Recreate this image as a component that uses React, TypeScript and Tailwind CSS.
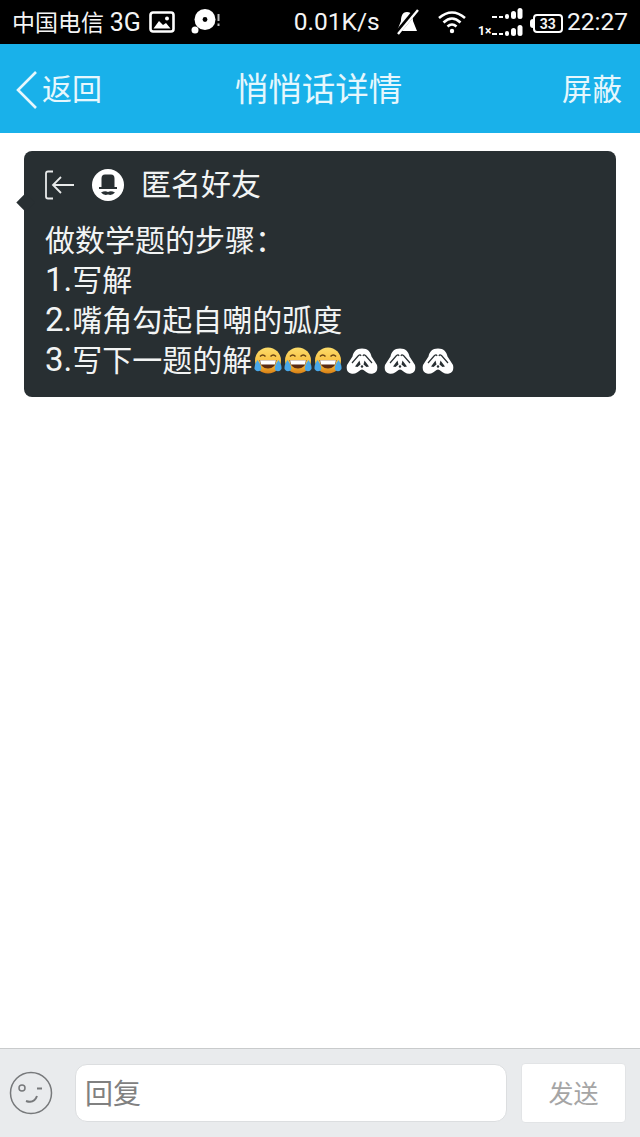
const font = { fontFamily: 'Roboto, "Noto Sans CJK SC", sans-serif' };

function Laugh() {
  return (
    <svg width="28" height="28" viewBox="0 0 28 28" className="shrink-0">
      <defs>
        <linearGradient id="lg" x1="0" y1="0" x2="0" y2="1">
          <stop offset="0" stopColor="#fcdc6a" />
          <stop offset="0.65" stopColor="#f6bb3c" />
          <stop offset="1" stopColor="#d97f14" />
        </linearGradient>
      </defs>
      <circle cx="14" cy="13.5" r="13" fill="url(#lg)" />
      <path d="M6 9.5 Q8.7 6.5 11.5 9.5 M16.5 9.5 Q19.3 6.5 22 9.5" stroke="#6a4514" strokeWidth="1.5" fill="none" />
      <path d="M5.5 13 H22.5 Q21.5 21.5 14 21.5 Q6.5 21.5 5.5 13 Z" fill="#5a2b12" />
      <path d="M6 13.2 H22 L21 17.5 H7 Z" fill="#fff" />
      <path d="M3.5 13 Q0 18 0.5 22 Q3 26 7 23 Q8 19 3.5 13 Z" fill="#4aa8e8" />
      <path d="M24.5 13 Q28 18 27.5 22 Q25 26 21 23 Q20 19 24.5 13 Z" fill="#4aa8e8" />
    </svg>
  );
}

function Monkey() {
  return (
    <svg width="32" height="27" viewBox="0 0 32 27" className="shrink-0">
      <path d="M16 0.5 C10 0.5 7.5 4 6.5 8.5 L1 17 Q-0.5 24 5 25.5 C9 26.5 12 24 14.5 22 Q16 21 17.5 22 C20 24 23 26.5 27 25.5 Q32.5 24 31 17 L25.5 8.5 C24.5 4 22 0.5 16 0.5 Z" fill="#fff" />
      <path d="M6 15 L12.5 7.5 Q14.5 6 15 8" fill="none" stroke="#282f32" strokeWidth="1.2" />
      <path d="M26 15 L19.5 7.5 Q17.5 6 17 8" fill="none" stroke="#282f32" strokeWidth="1.2" />
      <path d="M9 18.5 L13.5 12.5 L14.5 16.5 L11.5 19 Z M23 18.5 L18.5 12.5 L17.5 16.5 L20.5 19 Z" fill="#282f32" />
      <circle cx="16" cy="18.5" r="1.2" fill="#282f32" />
    </svg>
  );
}

export default function App() {
  return (
    <div className="flex h-[1137px] w-[640px] flex-col overflow-hidden bg-white" style={font}>
      <div className="flex h-[44px] shrink-0 items-center bg-black pl-[12px] pr-[12px] text-[#f4f4f4]">
        <span className="text-[23px] leading-none">中国电信 <span className="text-[25px]">3G</span></span>
        <svg width="26" height="22" viewBox="0 0 26 22" className="ml-[8px]">
          <rect x="1.5" y="1.5" width="23" height="19" rx="2.5" fill="none" stroke="#fff" strokeWidth="2.6" />
          <path d="M4.5 17.5 L10 10 L14 14 L17 12 L21.5 17.5 Z" fill="#fff" />
          <circle cx="18" cy="7.5" r="2" fill="#fff" />
        </svg>
        <svg width="32" height="26" viewBox="0 0 32 26" className="ml-[15px]">
          <circle cx="15" cy="10.5" r="10.5" fill="#fff" />
          <circle cx="15" cy="10.5" r="2.4" fill="#000" />
          <circle cx="5" cy="21" r="3.5" fill="#fff" />
          <path d="M28.5 5 V12 M28.5 14.5 V17" stroke="#bbb" strokeWidth="2" />
        </svg>
        <span className="ml-[72px] text-[24.5px] leading-none">0.01K/s</span>
        <svg width="26" height="26" viewBox="0 0 26 26" className="ml-[14px]">
          <path d="M13 3 C8 3 7 8 7 12 L3 22 H23 L19 12 C19 8 18 3 13 3 Z" fill="#fff" />
          <path d="M23 0 L3 24" stroke="#000" strokeWidth="5" />
          <path d="M24 1 L4 25" stroke="#fff" strokeWidth="2.4" />
        </svg>
        <svg width="30" height="24" viewBox="0 0 30 24" className="ml-[17px]">
          <path d="M2 8 Q15 -3 28 8 M6.5 12.5 Q15 4.5 23.5 12.5 M10.5 16.5 Q15 12.5 19.5 16.5" fill="none" stroke="#fff" strokeWidth="2.6" />
          <circle cx="15" cy="21" r="2.2" fill="#fff" />
        </svg>
        <svg width="46" height="30" viewBox="0 0 46 30" className="ml-[11px]">
          <text x="0" y="28" fontSize="12" fill="#fff" fontWeight="700">1×</text>
          <path d="M14 27 H19 M21 27 H25" stroke="#fff" strokeWidth="2" />
          <path d="M14 10 H19 M21 10 H25" stroke="#fff" strokeWidth="2" />
          <rect x="27" y="24" width="4" height="5" rx="2" fill="#fff" />
          <rect x="33" y="21" width="5" height="8" rx="2.5" fill="#fff" />
          <rect x="39.5" y="18" width="5" height="11" rx="2.5" fill="#fff" />
          <rect x="27" y="7" width="4" height="5" rx="2" fill="#fff" />
          <rect x="33" y="4" width="5" height="8" rx="2.5" fill="#fff" />
          <rect x="39.5" y="1" width="5" height="11" rx="2.5" fill="#fff" />
        </svg>
        <div className="relative ml-[9px] mt-[3px] flex h-[19px] w-[30px] items-center justify-center rounded-[4px] border-2 border-white text-[14px] font-bold leading-none">
          33
          <span className="absolute -left-[5px] top-[3px] h-[9px] w-[3px] rounded-l-sm bg-white" />
        </div>
        <span className="ml-auto text-[24.5px] leading-none">22:27</span>
      </div>

      <div className="flex h-[89px] shrink-0 items-center justify-between bg-[#19b1ea] pl-[15px] pr-[18px] pt-[3px] text-[#e6f7fd]">
        <div className="flex w-[120px] items-center">
          <svg width="24" height="40" viewBox="0 0 24 40">
            <path d="M21 2 L3 20 L21 38" fill="none" stroke="#e6f7fd" strokeWidth="2.6" />
          </svg>
          <span className="ml-[3px] text-[30px] leading-none">返回</span>
        </div>
        <span className="text-[33.5px] leading-none">悄悄话详情</span>
        <span className="w-[120px] text-right text-[30px] leading-none">屏蔽</span>
      </div>

      <div className="flex flex-1 flex-col px-[24px] pt-[18px]">
        <div className="relative h-[246px] rounded-[8px] bg-[#282f32] px-[21px] pt-[14px] text-[#f2f4f4]">
          <span className="absolute -left-[5px] top-[45px] h-[13px] w-[13px] rotate-45 bg-[#282f32]" />
          <div className="relative flex h-[40px] items-center">
            <svg width="30" height="30" viewBox="0 0 30 30">
              <path d="M8 1.5 H3 Q1 1.5 1 3.5 V26.5 Q1 28.5 3 28.5 H8" fill="none" stroke="#e8eaea" strokeWidth="1.8" />
              <path d="M29 15 H8 M16 7 L8 15 L16 23" fill="none" stroke="#e8eaea" strokeWidth="1.8" />
            </svg>
            <svg width="32" height="32" viewBox="0 0 32 32" className="ml-[17px]">
              <circle cx="16" cy="16" r="16" fill="#fff" />
              <path d="M9.5 18 V9.5 Q9.5 5.5 13 5.5 H19 Q22.5 5.5 22.5 9.5 V18 H25 V20 H7 V18 Z" fill="#282f32" />
              <path d="M9 23.5 Q13 21.5 16 23 Q19 21.5 23 23.5 Q20 27 16 25.5 Q12 27 9 23.5 Z" fill="#282f32" />
            </svg>
            <span className="ml-[17px] text-[30px] leading-none">匿名好友</span>
          </div>
          <div className="relative mt-[16px] text-[30px] leading-[40px]">
            <div className="h-[40px]">做数学题的步骤：</div>
            <div className="h-[40px]"><span className="text-[33px] leading-none">1.</span>写解</div>
            <div className="h-[40px]"><span className="text-[33px] leading-none">2.</span>嘴角勾起自嘲的弧度</div>
            <div className="flex h-[40px] items-center">
              <span><span className="text-[33px] leading-none">3.</span>写下一题的解</span>
              <span className="ml-[2px] flex gap-[2px]">
                <Laugh />
                <Laugh />
                <Laugh />
              </span>
              <span className="ml-[4px] flex gap-[6px]">
                <Monkey />
                <Monkey />
                <Monkey />
              </span>
            </div>
          </div>
        </div>
      </div>

      <div className="flex h-[89px] shrink-0 items-center border-t border-[#c9cbcc] bg-[#e9ebed] pl-[9px] pr-[14px]">
        <svg width="44" height="44" viewBox="0 0 44 44">
          <circle cx="22" cy="22" r="20.5" fill="none" stroke="#77797b" strokeWidth="1.5" />
          <circle cx="13" cy="17" r="3" fill="none" stroke="#77797b" strokeWidth="1.5" />
          <path d="M28 17.5 H33" stroke="#77797b" strokeWidth="2" />
          <path d="M17 30 Q25 33 28 25" fill="none" stroke="#77797b" strokeWidth="2" />
        </svg>
        <div className="ml-[22px] flex h-[58px] w-[432px] items-center rounded-[12px] border border-[#dcdee0] bg-white pl-[9px] pt-[3px] text-[28px] leading-none text-[#808080]">
          回复
        </div>
        <div className="ml-[14px] flex h-[60px] w-[105px] items-center justify-center rounded-[4px] border border-[#e2e4e6] bg-white pt-[2px] text-[25px] leading-none text-[#a5a5a5]">
          发送
        </div>
      </div>
    </div>
  );
}
